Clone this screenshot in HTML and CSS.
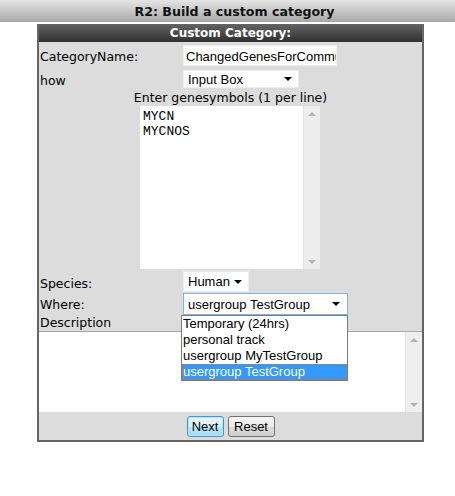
FILE: index.html
```html
<!DOCTYPE html>
<html>
<head>
<meta charset="utf-8">
<link rel="stylesheet" href="styles.css">
</head>
<body>
<div class="titlebar"><span class="title">R2: Build a custom category</span></div>
<div class="panel">
  <div class="panel-head">Custom Category:</div>
  <div class="panel-body">
    <div class="row row-name">
      <span class="label">CategoryName:</span>
      <div class="input"><span class="input-text">ChangedGenesForCommunity</span></div>
    </div>
    <div class="row row-how">
      <span class="label">how</span>
      <div class="select select-how"><span>Input Box</span><i class="arrow"></i></div>
    </div>
    <div class="center-label">Enter genesymbols (1 per line)</div>
    <div class="genes-wrap">
      <div class="textarea genes">
        <div class="ta-text">MYCN<br>MYCNOS</div>
        <div class="scroll"><i class="up"></i><i class="down"></i></div>
      </div>
    </div>
    <div class="row row-species">
      <span class="label">Species:</span>
      <div class="select select-species"><span>Human</span><i class="arrow"></i></div>
    </div>
    <div class="row row-where">
      <span class="label">Where:</span>
      <div class="select select-where"><span>usergroup TestGroup</span><i class="arrow"></i></div>
      <ul class="dropdown">
        <li>Temporary (24hrs)</li>
        <li>personal track</li>
        <li>usergroup MyTestGroup</li>
        <li class="sel">usergroup TestGroup</li>
      </ul>
    </div>
    <div class="desc-label">Description</div>
    <div class="textarea desc">
      <div class="ta-text"></div>
      <div class="scroll"><i class="up"></i><i class="down"></i></div>
    </div>
    <div class="buttons">
      <button class="btn btn-next">Next</button>
      <button class="btn btn-reset">Reset</button>
    </div>
  </div>
</div>
</body>
</html>
```
FILE: styles.css
```css
html, body {
  margin: 0;
  padding: 0;
  background: #fff;
}
body {
  font-family: "DejaVu Sans", Verdana, sans-serif;
  font-size: 12.5px;
  color: #000;
}
.titlebar {
  height: 22px;
  background: linear-gradient(#e4e4e4, #a8a8a8);
  display: flex;
  align-items: center;
  justify-content: center;
  padding-left: 14px;
}
.title {
  font-weight: bold;
  font-size: 12.6px;
  color: #111;
}
.panel {
  width: 383px;
  margin: 2px 0 0 37px;
  border: 2px solid #666;
  border-top: 0;
}
.panel-head {
  height: 18px;
  background: linear-gradient(#646464, #303030);
  color: #fff;
  font-weight: bold;
  font-size: 12px;
  text-align: center;
  line-height: 18px;
}
.panel-body {
  background: #dcdcdc;
  padding: 3px 0 3px 0;
}
.row {
  display: flex;
  align-items: center;
  position: relative;
}
.label {
  width: 143px;
  padding-left: 1px;
  flex: none;
}
.row-name { height: 21px; }
.row-name .label { padding-top: 2px; }
.input {
  height: 21px;
  line-height: 21px;
  background: #fff;
  border: 1px solid #ececec;
  box-sizing: border-box;
  width: 154px;
  padding-left: 2px;
  font-family: "Liberation Sans", Arial, sans-serif;
  font-size: 13px;
  overflow: hidden;
  white-space: nowrap;
}
.row-how {
  margin-top: 4px;
  height: 18px;
}
.row-how .label { padding-top: 2px; }
.select {
  height: 20px;
  background: #fff;
  border: 1px solid #ececec;
  box-sizing: border-box;
  display: flex;
  align-items: center;
  justify-content: space-between;
  padding: 0 6px 0 4px;
  font-family: "Liberation Sans", Arial, sans-serif;
  font-size: 13px;
}
.arrow {
  width: 0;
  height: 0;
  border-left: 4px solid transparent;
  border-right: 4px solid transparent;
  border-top: 4px solid #000;
}
.select-how { width: 116px; height: 18px; }
.center-label {
  text-align: center;
  height: 18px;
  line-height: 18px;
  padding-top: 1px;
  box-sizing: border-box;
}
.genes-wrap {
  padding-left: 101px;
}
.textarea {
  background: #fff;
  display: flex;
  box-sizing: border-box;
}
.genes {
  width: 180px;
  height: 163px;
}
.ta-text {
  flex: 1;
  font-family: "Liberation Mono", "Courier New", monospace;
  font-size: 13px;
  line-height: 15px;
  padding: 3px 0 0 3px;
}
.scroll {
  width: 17px;
  background: #ededed;
  border-left: 1px solid #e4e4e4;
  display: flex;
  flex-direction: column;
  justify-content: space-between;
  align-items: center;
  padding: 6px 0 5px;
  box-sizing: border-box;
}
.up {
  width: 0; height: 0;
  border-left: 4px solid transparent;
  border-right: 4px solid transparent;
  border-bottom: 4px solid #b4b4b4;
}
.down {
  width: 0; height: 0;
  border-left: 4px solid transparent;
  border-right: 4px solid transparent;
  border-top: 4px solid #b4b4b4;
}
.row-species {
  margin-top: 2px;
  height: 21px;
}
.row-species .label { padding-top: 3px; }
.select-species { width: 66px; height: 21px; }
.row-where {
  margin-top: 1px;
  height: 22px;
}
.row-where .label { padding-top: 1px; }
.select-where {
  width: 165px;
  height: 22px;
  border-color: #7eb4ea;
  padding-right: 7px;
}
.dropdown {
  position: absolute;
  left: 142px;
  top: 22px;
  width: 167px;
  margin: 0;
  padding: 0;
  list-style: none;
  background: #fff;
  border: 1px solid #7a7a7a;
  box-sizing: border-box;
  font-family: "Liberation Sans", Arial, sans-serif;
  font-size: 13px;
  z-index: 5;
}
.dropdown li {
  height: 16px;
  line-height: 16px;
  padding-left: 1px;
  white-space: nowrap;
}
.dropdown li.sel {
  background: #3399ff;
  color: #fff;
  outline: 1px dotted #e07020;
  outline-offset: -1px;
}
.desc-label {
  height: 16px;
  line-height: 16px;
  padding-left: 1px;
}
.desc {
  width: 383px;
  height: 81px;
  border-top: 1px solid #a8a8a8;
}
.desc .scroll {
  background: #efefef;
}
.buttons {
  display: flex;
  justify-content: center;
  gap: 4px;
  margin-top: 4px;
}
.btn {
  font-family: "Liberation Sans", Arial, sans-serif;
  font-size: 13px;
  height: 21px;
  padding: 0;
  border: 1px solid #707070;
  border-radius: 3px;
  background: linear-gradient(#f4f4f4 0%, #ebebeb 50%, #dddddd 51%, #cfcfcf 100%);
  color: #000;
}
.btn-next {
  width: 37px;
  border-color: #3c9bd6;
  background: linear-gradient(#eaf6fd 0%, #d9f0fc 50%, #bee6fd 51%, #a7d9f5 100%);
  box-shadow: inset 0 0 0 1px #b6e2fb;
}
.btn-reset {
  width: 47px;
}
```
